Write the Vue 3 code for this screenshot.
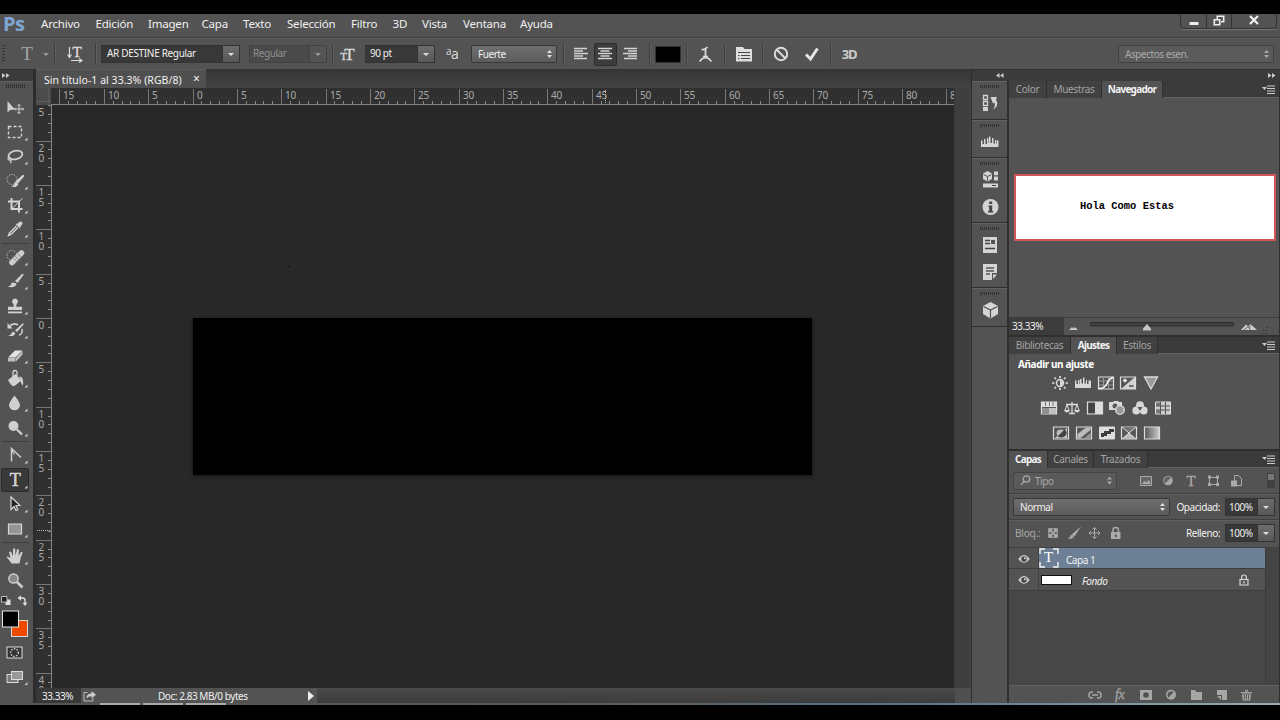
<template>
  <div class="screen">
    <header class="menubar">
      <span class="logo">Ps</span>
      <nav class="menus">
        <span v-for="m in menus" :key="m.label" :style="{ width: m.w + 'px' }">{{ m.label }}</span>
      </nav>
      <div class="window-buttons">
        <span class="min"><svg width="12" height="12"><path d="M1.5 8h9v3h-9z" fill="#eee" /></svg></span>
        <span class="restore"><svg width="12" height="12" fill="none" stroke="#eee" stroke-width="1.6"><path d="M4.3 4V1.3h6.4v5.4H8" /><path d="M1.3 4.8h5.4v5H1.3z" /></svg></span>
        <span class="close"><svg width="12" height="12"><path d="M2 2l8 8M10 2l-8 8" stroke="#eee" stroke-width="2.2" /></svg></span>
      </div>
    </header>

    <div class="options">
      <i class="vgrip"></i>
      <svg class="big-t" width="16" height="16"><text x="8" y="13.5" text-anchor="middle">T</text></svg>
      <i class="caret dim"></i>
      <i class="divider d1"></i>
      <svg class="orient" width="18" height="18" viewBox="0 0 18 18">
        <text x="11" y="12" text-anchor="middle">T</text>
        <path d="M3.5 2v10M1.5 9.5l2 3 2-3M5 15.5h10M13 13.5l3 2-3 2" />
      </svg>
      <i class="divider d2"></i>
      <div class="field font-name"><span>AR DESTINE Regular</span><b><i class="caret"></i></b></div>
      <div class="field font-style"><span>Regular</span><b><i class="caret dim"></i></b></div>
      <i class="divider d3"></i>
      <svg class="size-icon" width="17" height="16" viewBox="0 0 17 16">
        <text x="3.5" y="13.5" text-anchor="middle" font-size="11">T</text>
        <text x="9.5" y="13.5" text-anchor="middle" font-size="17">T</text>
      </svg>
      <div class="field font-size"><span>90 pt</span><b><i class="caret"></i></b></div>
      <span class="aa"><sup>a</sup>a</span>
      <div class="select strong"><span>Fuerte</span><i class="updown"></i></div>
      <i class="divider d4"></i>
      <span v-for="a in aligns" :key="a.id" class="align" :class="{ on: a.id === 'center' }">
        <svg width="14" height="14"><path :d="a.d" stroke="#d4d4d4" stroke-width="1.3" /></svg>
      </span>
      <i class="divider d5"></i>
      <i class="color-well"></i>
      <i class="divider d6"></i>
      <svg class="warp" width="14" height="18" viewBox="0 0 14 18" fill="none" stroke="#dcdcdc" stroke-width="1.7">
        <path d="M3.5 4.5q3.5.5 6-2.5M7.5 3.5v8M5 11.5h5" />
        <path d="M1.5 16.5l3-3q3-1.5 6 0l3 3" />
      </svg>
      <i class="divider d7"></i>
      <svg class="panel-toggle" width="16" height="16" viewBox="0 0 16 16">
        <path d="M0 1h7l1.5 2H16v12.5H0z" fill="#dedede" />
        <path d="M2 6.5h12M2 9.5h1.5M5 9.5h9M2 12.5h1.5M5 12.5h9" stroke="#484848" stroke-width="1.2" />
      </svg>
      <i class="divider d8"></i>
      <svg class="cancel" width="16" height="16"><circle cx="8" cy="8" r="6.2" /><path d="M4 4l8 8" /></svg>
      <svg class="commit" width="16" height="16"><path d="M2 8.5L6.5 13l7-10.5" /></svg>
      <i class="divider d9"></i>
      <span class="three-d">3D</span>
      <div class="select workspace"><span>Aspectos esen.</span><i class="updown"></i></div>
    </div>

    <main class="work">
      <aside class="tools">
        <div class="strip-head"><svg width="8" height="7"><path d="M0 1l3.5 2.5L0 6zM4 1l3.5 2.5L4 6z" fill="#ccc" /></svg></div>
        <div class="tools-body">
          <i class="grip"></i>
          <div v-for="(group, gi) in toolGroups" :key="gi" class="tool-group">
            <div v-for="t in group" :key="t" class="tool" :class="{ on: t === 'type' }">
              <svg width="24" height="24" viewBox="0 0 24 24">
                <g v-html="toolIcons[t]"></g>
                <path v-if="!['move', 'zoom'].includes(t)" d="M21.5 20.5h3v-3z" />
              </svg>
            </div>
          </div>
          <svg class="swatches" width="33" height="94" viewBox="0 0 33 94">
            <path d="M5.5 5.5h5V11h-5z" fill="#e0e0e0" />
            <path d="M1.5 2.5H7V8H1.5z" fill="#222" stroke="#bbb" />
            <path d="M19.5 4h3Q25 4 25 6.5v3" fill="none" stroke="#ddd" stroke-width="1.4" />
            <path d="M17.5 4L21 1.2v5.6zM25 12l-2.500-3.200h5z" fill="#ddd" />
            <rect x="11.5" y="26.5" width="16" height="16" fill="#ee4b00" stroke="#d8d8d8" />
            <rect x="2.5" y="17" width="16" height="16" fill="#000" stroke="#e4e4e4" />
            <rect x="7" y="53" width="15" height="11" fill="#333" stroke="#ddd" />
            <circle cx="14.5" cy="58.5" r="3.8" fill="#333" stroke="#ddd" stroke-width="1.3" stroke-dasharray="1.5 1.3" />
            <rect x="7" y="80.5" width="11" height="8" fill="#777" stroke="#ddd" />
            <rect x="11.5" y="77.5" width="11" height="8" fill="#999" stroke="#ddd" />
            <path d="M24.5 91h3v-3z" fill="#ccc" />
          </svg>
        </div>
      </aside>

      <section class="document">
        <div class="tabs-row">
          <div class="doc-tab"><span>Sin título-1 al 33.3% (RGB/8)</span><em>×</em></div>
        </div>
        <div class="doc-area">
          <div class="doc-main">
            <svg class="ruler" width="918" height="17" viewBox="36 88 918 17">
              <rect x="36" y="88" width="918" height="17" fill="#303030" />
              <path :d="hMinor" stroke="#888" />
              <path :d="hMajor" stroke="#777" />
              <rect x="36" y="88" width="15" height="17" fill="#4b4b4b" />
              <path d="M48.5 89v15M37 101.5h14" stroke="#777" stroke-dasharray="1 1.5" />
              <text v-for="l in hLabels" :key="l.x" :x="l.x + 3.5" y="99">{{ l.text }}</text>
              <path d="M605.5 90v14" stroke="#bbb" stroke-dasharray="1 1" />
              <path d="M51 104.5h903" stroke="#858585" />
            </svg>
            <div class="canvas-row">
              <svg class="ruler" width="16" height="583" viewBox="36 105 16 583">
                <rect x="36" y="105" width="16" height="583" fill="#303030" />
                <path :d="vMinor" stroke="#888" />
                <path :d="vMajor" stroke="#777" />
                <text x="38.5" y="115.5">5</text>
                <template v-for="l in vLabels" :key="l.y">
                  <text v-for="(c, i) in l.text" :key="i" x="38.5" :y="l.y + 10.5 + i * 9.5">{{ c }}</text>
                </template>
                <path d="M37 530.5h14" stroke="#bbb" stroke-dasharray="1 1" />
                <path d="M51.5 105v583" stroke="#858585" />
              </svg>
              <div class="canvas"><i class="speck"></i><div class="sheet"></div></div>
            </div>
          </div>
          <div class="vscroll"></div>
        </div>
        <footer class="status">
          <span class="zoom">33.33%</span>
          <div class="doc-info">
            <svg width="13" height="12" viewBox="0 0 13 12"><path d="M4.5 2.5H1V11h9V8" fill="none" stroke="#bbb" /><path d="M3.5 8.5q0-5 5-5V1L13 4.8 8.500 8.500V6q-3 0-5 2.500z" fill="#ccc" /></svg>
            <span>Doc: 2.83 MB/0 bytes</span>
            <i></i>
          </div>
          <div class="corner"></div>
        </footer>
      </section>

      <section class="right">
        <div class="strip-head wide">
          <svg width="8" height="7"><path d="M7.5 1L4 3.5 7.5 6zM3.5 1L0 3.5 3.5 6z" fill="#ccc" /></svg>
          <svg width="8" height="7"><path d="M0 1l3.5 2.5L0 6zM4 1l3.5 2.5L4 6z" fill="#ccc" /></svg>
        </div>
        <div class="right-body">
          <aside class="dock">
            <div v-for="(group, gi) in dockGroups" :key="gi" class="dock-group">
              <i class="grip"></i>
              <div v-for="d in group" :key="d" class="dock-icon">
                <svg width="20" height="20" viewBox="0 0 20 20" v-html="dockIcons[d]"></svg>
              </div>
            </div>
          </aside>

          <div class="panels">
            <div class="panel navigator">
              <div class="ptabs">
                <span class="t-color">Color</span><span class="t-swatch">Muestras</span><span class="t-nav on">Navegador</span>
                <svg class="pmenu" width="13" height="9" v-html="panelMenu"></svg>
              </div>
              <div class="nav-view"><div class="thumb">Hola Como Estas</div></div>
              <div class="nav-foot">
                <span>33.33%</span>
                <svg width="206" height="18" viewBox="0 0 206 18">
                  <path d="M5 12l3-3 1.5 1.5L11 9l3 3z" fill="#ccc" />
                  <rect x="26.5" y="4.5" width="143" height="3.5" rx="1" fill="#404040" stroke="#2c2c2c" />
                  <path d="M79 12.5v-2L83 6l4 4.5v2z" fill="#c4c4c4" />
                  <path d="M177 12l5-5.5 2.500 2 2-2.500 6.500 6z" fill="#ccc" />
                  <path d="M180 12l4-3.5 2.500 3.500M185 10l2-2.500" stroke="#666" fill="none" />
                  <path d="M196 15.5h9M199 12.5h6M202 9.5h3" stroke="#353535" stroke-dasharray="1.5 1.5" />
                </svg>
              </div>
            </div>

            <div class="panel adjustments">
              <div class="ptabs">
                <span class="t-lib">Bibliotecas</span><span class="t-adj on">Ajustes</span><span class="t-sty">Estilos</span>
                <svg class="pmenu" width="13" height="9" v-html="panelMenu"></svg>
              </div>
              <h4>Añadir un ajuste</h4>
              <div v-for="(row, ri) in adjustRows" :key="ri" class="adj-row" :class="'r' + ri">
                <svg v-for="a in row" :key="a" width="16" height="14" viewBox="0 0 16 14" v-html="adjustIcons[a]"></svg>
              </div>
            </div>

            <div class="panel layers">
              <div class="ptabs">
                <span class="t-lay on">Capas</span><span class="t-chan">Canales</span><span class="t-path">Trazados</span>
                <svg class="pmenu" width="13" height="9" v-html="panelMenu"></svg>
              </div>
              <div class="lrow filter">
                <div class="select kind">
                  <svg width="11" height="11" fill="none" stroke="#aaa" stroke-width="1.3"><circle cx="6.5" cy="4" r="3.2" /><path d="M4.3 6.3L1 9.8" /></svg>
                  <span>Tipo</span><i class="updown"></i>
                </div>
                <svg class="filters" width="104" height="14" viewBox="0 0 104 14">
                  <path d="M.5 2.5h11v9H.5z" fill="#666" stroke="#aaa" /><path d="M2 10l2.500-3 2 1.500L9 6l1.500 4z" fill="#aaa" />
                  <circle cx="28" cy="6.5" r="4.8" fill="#aaa" /><path d="M25.200 9.400a4 4 0 0 1 5.700-5.700z" fill="#666" />
                  <text x="51" y="11.5" text-anchor="middle" font-size="15" font-family="Liberation Serif" fill="#aaa" stroke="#aaa" stroke-width=".3">T</text>
                  <path d="M69.5 3.5h8v7h-8z" fill="none" stroke="#aaa" /><path d="M68 1.5h3v3h-3zM76 1.5h3v3h-3zM68 9h3v3h-3zM76 9h3v3h-3z" fill="#aaa" />
                  <path d="M94.5 1.5h4l3 3v7h-7z" fill="#555" stroke="#aaa" /><path d="M91 6.5h6v6h-6z" fill="#aaa" />
                </svg>
                <i class="toggle"></i>
              </div>
              <div class="lrow blend">
                <div class="select mode"><span>Normal</span><i class="updown"></i></div>
                <label>Opacidad:</label>
                <div class="field pct"><span>100%</span><b><i class="caret"></i></b></div>
              </div>
              <div class="lrow lock">
                <span class="bloq">Bloq.:</span>
                <svg width="76" height="14" viewBox="0 0 76 14">
                  <path d="M1.5 2.5h9v9h-9z" fill="#666" stroke="#999" />
                  <path d="M2 3h3v3H2zM7 3h3v3H7zM4.5 5.5h3v3h-3zM2 8h3v3H2zM7 8h3v3H7z" fill="#aaa" />
                  <path d="M20 12.5q3 0 3.500-3.500l2 .3 1.500 2q-3 2.500-7 1.200zM24.500 8.500L34 .5l-6.500 10z" fill="#aaa" />
                  <path d="M42 7h11M47.5 1.5v11M45.5 3.5l2-2 2 2M45.5 10.5l2 2 2-2M44 5l-2 2 2 2M51 5l2 2-2 2" stroke="#aaa" fill="none" />
                  <path d="M64 6h9.500v7H64z" fill="#aaa" /><path d="M66 6V4q0-2.500 2.700-2.500T71.500 4v2" fill="none" stroke="#aaa" stroke-width="1.5" /><path d="M68 8.5h1.500V11H68z" fill="#444" />
                </svg>
                <label>Relleno:</label>
                <div class="field pct"><span>100%</span><b><i class="caret"></i></b></div>
              </div>
              <div class="layer-area">
                <div class="layer-list">
                  <div class="layer active">
                    <div class="eye"><svg width="12" height="10" viewBox="0 0 12 10" v-html="eyeIcon"></svg></div>
                    <svg class="type-thumb" width="20" height="20" viewBox="0 0 20 20">
                      <path d="M1 6V1h5M14 1h5v5M19 14v5h-5M6 19H1v-5" fill="none" stroke="#f2f2f2" stroke-width="1.4" />
                      <text x="9.5" y="13.5" text-anchor="middle" font-family="Liberation Serif" font-size="15" fill="#fff">T</text>
                    </svg>
                    <span class="name">Capa 1</span>
                  </div>
                  <div class="layer">
                    <div class="eye"><svg width="12" height="10" viewBox="0 0 12 10" v-html="eyeIcon"></svg></div>
                    <i class="bg-thumb"></i>
                    <span class="name bg">Fondo</span>
                    <svg class="padlock" width="10" height="12" viewBox="0 0 10 12"><path d="M1 5.5h8V11H1z" fill="#555" stroke="#ddd" stroke-width="1.2" /><path d="M2.700 5V3q0-2 2.300-2t2.300 2v2" fill="none" stroke="#ddd" stroke-width="1.2" /><path d="M4.500 7h1.200v2.500H4.500z" fill="#ddd" /></svg>
                  </div>
                </div>
                <i class="layer-scroll"></i>
              </div>
              <div class="layer-foot">
                <svg width="168" height="14" viewBox="0 0 168 14" fill="#a6a6a6">
                  <path d="M6 4H4.500Q2 4 2 7t2.500 3H6M10 4h1.500Q14 4 14 7t-2.500 3H10M5 7h6" fill="none" stroke="#a6a6a6" stroke-width="1.5" />
                  <text x="28" y="11" font-family="Liberation Serif" font-style="italic" font-size="14" stroke="#a6a6a6" stroke-width=".3">fx</text>
                  <path d="M53 2h12v10H53z" /><circle cx="59" cy="7" r="2.8" fill="#505050" />
                  <circle cx="84" cy="6.8" r="5" /><path d="M81.400 9.400a3.700 3.700 0 0 1 5.200-5.200z" fill="#555" />
                  <path d="M104 2h4l1.500 2h5.500v8H104z" />
                  <path d="M130 2h10v10h-5V7h-5z" /><path d="M130 8h4v4z" />
                  <path d="M154 4h11v1.500h-11zM158 2h3v1.500h-3zM155 6.500h9l-.8 6h-7.400z" /><path d="M157.500 7v4.500M159.500 7v4.500M161.500 7v4.500" stroke="#555" />
                </svg>
              </div>
            </div>
          </div>
        </div>
      </section>
    </main>
    <div class="edge"><i></i><i></i><i></i></div>
  </div>
</template>

<script setup>
const menus = [
  { label: 'Archivo', w: 54.5 },
  { label: 'Edición', w: 52.5 },
  { label: 'Imagen', w: 53.5 },
  { label: 'Capa', w: 41.5 },
  { label: 'Texto', w: 44 },
  { label: 'Selección', w: 64 },
  { label: 'Filtro', w: 41.5 },
  { label: '3D', w: 29.5 },
  { label: 'Vista', w: 41 },
  { label: 'Ventana', w: 57 },
  { label: 'Ayuda', w: 50 },
];

const aligns = [
  { id: 'left', d: 'M0 1.5h13M0 4h9M0 6.5h14M0 9h9M0 11.5h13' },
  { id: 'center', d: 'M0 1.5h14M2.5 4h9M0 6.5h14M2.5 9h9M0 11.5h14' },
  { id: 'right', d: 'M1 1.5h13M5 4h9M0 6.5h14M5 9h9M1 11.5h13' },
];

// Rulers: one labelled tick every 5 cm, in window pixels
const STEP = 44.35;
const ORIGIN_X = 193;
const ORIGIN_Y = 318.5;
const snap = (v) => Math.floor(v) + 0.5;

const hLabels = [];
for (let i = -3; i <= 17; i++) {
  hLabels.push({ x: snap(ORIGIN_X + i * STEP), text: String(Math.abs(i * 5)) });
}
const vLabels = [];
for (let i = -4; i <= 8; i++) {
  vLabels.push({ y: snap(ORIGIN_Y + i * STEP), text: String(Math.abs(i * 5)) });
}
const hMajor = hLabels.map((l) => `M${l.x} 89v15`).join('');
const vMajor = vLabels.map((l) => `M36 ${l.y}h15`).join('');

let hMinor = '';
for (let i = -15; i <= 85; i++) hMinor += `M${snap(ORIGIN_X + (i * STEP) / 5)} 101v3`;
let vMinor = '';
for (let i = -24; i <= 41; i++) vMinor += `M48 ${snap(ORIGIN_Y + (i * STEP) / 5)}h3`;

const panelMenu = '<path d="M0 2h5L2.5 5z" fill="#ccc"/><path d="M5 1h8M5 3.5h8M5 6h8M5 8.5h8" stroke="#ccc"/>';
const eyeIcon = '<path d="M.3 5q5.700-8 11.400 0-5.700 7.500-11.400 0z" fill="#ccc"/><circle cx="6" cy="5" r="2.7" fill="#444"/><circle cx="6.8" cy="4.3" r="1" fill="#ddd"/>';

const toolGroups = [
  ['move', 'marquee', 'lasso', 'quick', 'crop', 'eyedropper'],
  ['heal', 'brush', 'stamp', 'history', 'eraser', 'bucket', 'blur', 'dodge'],
  ['pen', 'type', 'select', 'shape'],
  ['hand', 'zoom'],
];

const toolIcons = {
  move: '<path d="M4.5 6v11.500l2.500-2.500 5-.5z"/><path d="M16 9.500v9M11.500 14h9M14.500 11l1.500-1.500 1.500 1.500M14.500 17l1.500 1.500 1.500-1.500M13 12.500L11.500 14l1.500 1.500M19 12.500l1.500 1.500-1.500 1.500" fill="none" stroke="#d4d4d4"/>',
  marquee: '<path d="M5.5 6.500h13v11h-13z" fill="none" stroke="#d4d4d4" stroke-width="1.4" stroke-dasharray="3 2"/>',
  lasso: '<ellipse cx="12.5" cy="11" rx="7" ry="4.3" transform="rotate(-12 12.5 11)" fill="none" stroke="#d0d0d0" stroke-width="1.8"/><path d="M6 13q-2 2 0 3t2-1M7 16q2 1 .5 3" fill="none" stroke="#d0d0d0" stroke-width="1.3"/>',
  quick: '<circle cx="9" cy="10.5" r="5" fill="none" stroke="#ccc" stroke-dasharray="1.2 1.3"/><path d="M20 5.500l1.500 1.500-6.500 7.500-2.500-2zM8 17.500q3 0 4-5l3.500 2.500q-2 4.500-7.500 2.500z"/>',
  crop: '<path d="M8.5 5v11h11M5 8.500h11v11" fill="none" stroke="#d4d4d4" stroke-width="2"/><path d="M9 15.500L19.500 5.500" stroke="#d4d4d4"/>',
  eyedropper: '<path d="M14.500 6.500q3-3 4.500-1.500t-1.500 4.500l-.5 2-4.500-4.500z"/><path d="M13.500 9L6.500 16l-1 2.500L8 17.500l7-7" fill="#555" stroke="#d4d4d4" stroke-width="1.4"/>',
  heal: '<circle cx="9" cy="10.5" r="5" fill="none" stroke="#ccc" stroke-dasharray="1.2 1.3"/><path d="M9 17.500L18.500 8" stroke="#ccc" stroke-width="5.5" stroke-linecap="round"/><path d="M12 11l4.500 4.500M10.500 13l4 4M15 9l3.500 3.500" stroke="#777" stroke-width=".8"/>',
  brush: '<path d="M19.500 4.500l1.200 1.200-6.200 8.300-2.500-2zM4 17.500q4 0 4.500-3.500 3-1.500 5 1-2 5-9.500 2.500z"/>',
  stamp: '<path d="M12 4.500a3 3 0 0 1 2 5.200q-1 1-.7 3H19v3.300H5v-3.300h5.700q.3-2-.7-3a3 3 0 0 1 2-5.200z"/><path d="M5 17.500h14v1.800H5z"/>',
  history: '<path d="M5 17.500q3 0 4.500-4l3 1.500q-1.500 4.500-7.500 2.500zM20 5l.8 1.300-6.800 7.700-2-1.500z"/><path d="M6 9q4-5 9-2M16 17q4-1 3-6" fill="none" stroke="#d0d0d0" stroke-width="1.6"/><path d="M4.500 5v5.500h5z"/>',
  eraser: '<path d="M5 14.500l7-7h7.500l-7 7z" fill="#e4e4e4"/><path d="M5 15h7.500v3.500H5zM13 15l6.500-7v3.500L13 18.500z" fill="#c0c0c0"/>',
  bucket: '<path d="M5 13l7.500-6 6 6.500-7 5.500q-2.500 1.500-6.500-6z"/><path d="M10 11V6q0-2.500 2-2.500T14 6v3" fill="none" stroke="#d0d0d0" stroke-width="1.3"/><path d="M16 9.500q5-.5 4 9-2-1-2.500-6z"/>',
  blur: '<path d="M11.500 4.500q5.500 7 5.500 9.500a5 4.800 0 0 1-11 0q0-2.500 5.500-9.500z"/>',
  dodge: '<circle cx="10.5" cy="10" r="5"/><path d="M14 13.500l5 5" stroke="#ccc" stroke-width="2.4"/>',
  pen: '<path d="M8.500 18.500V5.500L18 14.500" fill="none" stroke="#ccc" stroke-width="1.5"/><path d="M8.500 5l3.500 7-1-.5-2.500-3z"/>',
  type: '<text x="12" y="17.5" text-anchor="middle" font-family="Liberation Serif" font-size="18" stroke="#dcdcdc" stroke-width=".5">T</text>',
  select: '<path d="M8 5v12.500l3-3 2 4 1.800-.8-1.900-4 3.900-.4z" fill="#222" stroke="#d8d8d8" stroke-width="1.2"/>',
  shape: '<path d="M5.500 7h13v10h-13z" fill="#959595" stroke="#d8d8d8" stroke-width="1.2"/>',
  hand: '<path d="M8.500 19.500q-1-2-5-6.500 1-1.500 4 1.200L6 8q1.500-1 2.500.5l1.500 4V5q1-1.500 2.200 0l.3 6.500L14 5.500q1.300-1 2 .5l-.5 6L18 8q1.500-.5 1.500 1-2.500 5-3 10.500z"/>',
  zoom: '<circle cx="10.5" cy="9.5" r="4.6" fill="#888" stroke="#ccc" stroke-width="1.5"/><path d="M14 13l5.500 5.500" stroke="#ccc" stroke-width="2.6"/>',
};

const dockGroups = [['history'], ['histogram'], ['props', 'info'], ['char', 'notes'], ['cube']];

const dockIcons = {
  history: '<path d="M3.500 2.500h4v4h-4zM3.500 8.500h4v4h-4z" fill="none" stroke="#d4d4d4" stroke-width="1.3"/><path d="M3 14h5v4H3z"/><path d="M11.500 17.500q4.500-3 3-8l-1.500 1L10.500 4h6.500l-1 2.500q4 7-4.500 11z"/>',
  histogram: '<path d="M1 15V8.500h1.500V12H4V7h1.500v5H7V6h1.500v5H9V4.500h1.500V11H12V6h1.500v5.500H15V8h1.500v4H17V8.500h1.500V15z"/>',
  props: '<path d="M7.500 1L12 3.500v5.500l-4.500 2.500L3 9V3.500z"/><path d="M3.500 4.500l4 2 4-2M7.500 6.500V11" fill="none" stroke="#555"/><path d="M14 1.500h4v3.700h-4zM14 6.500h4v4h-4zM3 13.500h15v4H3z"/><path d="M12 15.500h4" stroke="#444"/>',
  info: '<circle cx="10.5" cy="10" r="8"/><path d="M9.200 4.500h3V7h-3zM8.500 8.500h3.700v5.500h1v1.500H8V14h1.200v-4h-.7z" fill="#444"/>',
  char: '<path d="M3 2h14v16H3z"/><path d="M5 5.500h5M5 8.500h5M5 13.500h10" stroke="#444" stroke-width="1.5"/><path d="M11 5h4v4h-4z" fill="#555"/>',
  notes: '<path d="M3 2h14v9h-5v7H3z"/><path d="M13 12.500h4L13 17z"/><path d="M6 6h8M6 9h8M6 12h4" stroke="#555" stroke-width="1.3"/>',
  cube: '<path d="M10.500 2l7.500 4v8l-7.500 4.500L3 14V6z"/><path d="M3.500 6.500l7 3.500 7-3.500M10.500 10v8" fill="none" stroke="#505050" stroke-width="1.2"/>',
};

const adjustRows = [
  ['bright', 'levels', 'curves', 'exposure', 'vibrance'],
  ['hue', 'balance', 'bw', 'photo', 'mixer', 'lookup'],
  ['invert', 'poster', 'threshold', 'selective', 'gradient'],
];

const frame = '<path d="M.5 1h15v12H.5z" fill="#555" stroke="#ddd" stroke-width="1.2"/>';

const adjustIcons = {
  bright: '<circle cx="8" cy="7" r="3.5" fill="none" stroke="#ddd" stroke-width="1.4"/><path d="M8 4v6q3 0 3-3t-3-3z"/><path d="M8 0v2M8 12v2M0 7h2.500M13.500 7H16M2.500 1.500L4 3M12 11l1.500 1.500M13.500 1.500L12 3M4 11l-1.500 1.500" stroke="#ddd" stroke-width="1.7"/>',
  levels: '<path d="M0 12V4.500h1.500V8H3V4h1.500v4H5V3h1.500v4.500H8V1.500h1.500v6H11V4h1v4h1.500V4.500H16V12z"/>',
  curves: frame + '<path d="M5.500 1v12M10.500 1v12M1 5h14M1 9h14" stroke="#999"/><path d="M1 12.500q6 0 8-5t6-6" fill="none" stroke="#fff" stroke-width="1.5"/>',
  exposure: frame + '<path d="M1 13L15 1v12z" fill="#d4d4d4"/><path d="M3 4.500h4M5 2.500v4" stroke="#fff" stroke-width="1.3"/><path d="M9 10h4.500" stroke="#333" stroke-width="1.3"/>',
  vibrance: '<path d="M1.500 1h13L8 13z" fill="#999" stroke="#ddd" stroke-width="1.3"/>',
  hue: frame + '<path d="M1 1h14v5H1z" fill="#ddd"/><path d="M4.500 1v4M8.500 1v4M12 1v4" stroke="#777"/><path d="M8 7h7v6H8z" fill="#c0c0c0"/><path d="M1 7h7v6H1z" fill="#909090"/>',
  balance: '<path d="M2 3.500h12M8 1v11M5 12.500h6" stroke="#ddd" stroke-width="1.3"/><path d="M3 4L.8 9.500h4.400zM13 4l-2.200 5.500h4.400z" fill="none" stroke="#ddd"/><path d="M0 9.500h6q-3 4-6 0zM10 9.500h6q-3 4-6 0z"/>',
  bw: frame + '<path d="M8 1h7.500v12H8z" fill="#ddd"/><path d="M1.500 2H8v10H1.500z" fill="#444"/>',
  photo: '<path d="M0 1h4l1-1h4l1 1h3v8H0z"/><circle cx="6" cy="5" r="2.5" fill="#555"/><circle cx="11" cy="9" r="4.3" fill="#999" stroke="#ddd" stroke-width="1.3"/>',
  mixer: '<circle cx="8" cy="4.2" r="3.9"/><circle cx="4.3" cy="9.5" r="3.9"/><circle cx="11.7" cy="9.5" r="3.9"/><path d="M5.500 6h5L8 10z" fill="#555"/>',
  lookup: '<path d="M.5 1h15v12H.5z" fill="#ccc" stroke="#ddd"/><path d="M1 1.500h4v3.500H1zM1 9.500h4v3H1z" fill="#777"/><path d="M5.500 1v12M10.500 1v12M1 5h14M1 9h14" stroke="#555"/>',
  invert: frame + '<path d="M2 12L14 2v10z" fill="#ccc"/><ellipse cx="8" cy="7" rx="4.5" ry="3.5" fill="#bbb"/><path d="M11.500 3.500a4.500 3.500 0 0 1-7 7z" fill="#444"/>',
  poster: frame + '<path d="M1.500 8L10 1.500h4.500V4L4 12.500H1.500z" fill="#bbb"/><path d="M8 12.500L14.500 7v5.500z" fill="#999"/>',
  threshold: '<path d="M.5 1h15v12H.5z" fill="#ddd" stroke="#ddd"/><path d="M2 9V7h3V5h5V3h5v3h-3v2H8v2H5v1H2z" fill="#3c3c3c"/>',
  selective: frame + '<path d="M1 1h14L8 7z" fill="#777"/><path d="M1 13h14L8 7z" fill="#bbb"/><path d="M1 1l14 12M15 1L1 13" stroke="#ddd"/>',
  gradient: '<defs><linearGradient id="gm"><stop offset="0" stop-color="#555"/><stop offset="1" stop-color="#ccc"/></linearGradient></defs><path d="M.5 1h15v12H.5z" fill="url(#gm)" stroke="#ddd" stroke-width="1.2"/>',
};
</script>

<style>
body {
  background: #000;
  overflow: hidden;
}
</style>

<style scoped>
.screen {
  width: 1280px;
  height: 720px;
  box-sizing: border-box;
  padding-top: 14px;
  background: #000;
  color: #f0f0f0;
  font: 10px/14px "Noto Sans", "Open Sans", sans-serif;
  letter-spacing: -.45px;
  display: flex;
  flex-direction: column;
  overflow: hidden;
  white-space: nowrap;
}

.screen * {
  box-sizing: border-box;
}

svg {
  display: block;
  flex: none;
  overflow: visible;
}

svg.ruler { overflow: hidden; }

i {
  display: block;
  flex: none;
}

/* Menu bar */
.menubar {
  height: 24px;
  flex: none;
  display: flex;
  background: #535353;
  border-bottom: 1px solid #404040;
}

.logo {
  width: 41px;
  padding-left: 3px;
  font: bold 20px/19px "Open Sans", sans-serif;
  color: #7fa6d2;
}

.menus {
  display: flex;
  flex: 1;
  font-size: 11.5px;
  letter-spacing: -.2px;
  line-height: 20px;
}

.window-buttons {
  display: flex;
  width: 97px;
  height: 15px;
  margin-right: 3px;
  border: 1px solid #333;
  border-top: 0;
  border-radius: 0 0 3px 3px;
  box-shadow: 0 1px 0 #777;
}

.window-buttons span {
  display: flex;
  justify-content: center;
  border-right: 1px solid #333;
}

.min { width: 26px; }
.restore { width: 25px; }
.window-buttons .restore { padding-top: 1px; }
.window-buttons .close { flex: 1; border: 0; }

/* Options bar */
.options {
  height: 31px;
  flex: none;
  display: flex;
  align-items: center;
  background: #535353;
  border-top: 1px solid #5e5e5e;
}

.vgrip {
  width: 3px;
  height: 18px;
  margin: 0 16px 0 2px;
  background: repeating-linear-gradient(#333 0 1px, #535353 1px 3px);
}

.options text {
  font-family: "Liberation Serif", serif;
  letter-spacing: 0;
  fill: #dcdcdc;
}

.big-t text { font-size: 19px; fill: #a4a4a4; }
.orient text { font-size: 15px; stroke: #dcdcdc; stroke-width: .4px; }
.orient path { fill: none; stroke: #dcdcdc; stroke-width: 1.2px; }
.size-icon { margin-left: 6px; }
.size-icon text { stroke: #dcdcdc; stroke-width: .3px; }
.big-t { margin-left: -2px; }

.caret {
  border: 3px solid transparent;
  border-top: 3px solid #e0e0e0;
  border-bottom: 0;
}

.caret.dim { border-top-color: #999; }
.options > .caret { margin-left: 8px; }

.divider {
  width: 2px;
  height: 22px;
  background: #3f3f3f;
  border-right: 1px solid #5e5e5e;
}

.d1 { margin: 0 10px 0 5px; }
.d2 { margin: 0 4px 0 11px; }
.d3 { margin-left: 5px; }
.d4 { margin: 0 4px 0 6px; }
.d5 { margin: 0 4px 0 6px; }
.d6 { margin: 0 10px 0 5px; }
.d7 { margin: 0 10px 0 12px; }
.d8 { margin: 0 9px 0 10px; }
.d9 { margin: 0 10px 0 10px; }

.field {
  display: flex;
  height: 18px;
  border: 1px solid #333;
  background: #383838;
  line-height: 15px;
  color: #f0f0f0;
}

.field span {
  flex: 1;
  padding-left: 5px;
}

.field b {
  width: 17px;
  display: flex;
  align-items: center;
  justify-content: center;
  background: linear-gradient(#6c6c6c, #585858);
  border-left: 1px solid #333;
}

.font-name { width: 139px; letter-spacing: -.33px; }
.font-style { width: 78px; margin-left: 9px; background: #4a4a4a; border-color: #424242; color: #8f8f8f; }
.font-style span { padding-left: 3px; }
.font-style b { background: #545454; border-color: #424242; }
.font-size { width: 70px; margin-left: 8px; }
.font-size span { padding-left: 4px; }

.aa {
  width: 25px;
  margin-left: 11px;
  font: 14px/16px "Open Sans", sans-serif;
  color: #ddd;
}

.aa sup {
  font-size: 10px;
  line-height: 8px;
  vertical-align: 4px;
}

.select {
  display: flex;
  align-items: center;
  justify-content: space-between;
  height: 18px;
  padding: 0 4px 0 6px;
  border: 1px solid #383838;
  border-radius: 2px;
  background: linear-gradient(#6f6f6f, #5b5b5b);
  color: #f0f0f0;
}

.strong { width: 86px; }

.updown {
  width: 5px;
  height: 8px;
  background: #e0e0e0;
  clip-path: polygon(50% 0, 100% 38%, 0 38%, 0 62%, 100% 62%, 50% 100%, 0 62%, 0 38%);
}

.workspace {
  width: 156px;
  margin: 0 6px 0 auto;
  background: #5a5a5a;
  border-color: #414141;
  color: #aaa;
}

.workspace .updown { background: #aaa; }

.align {
  width: 23px;
  height: 23px;
  margin-right: 1.6px;
  display: flex;
  align-items: center;
  justify-content: center;
  border: 1px solid transparent;
  border-radius: 2px;
}

.align.on {
  background: #3c3c3c;
  border-color: #2d2d2d;
}

.color-well {
  width: 26px;
  height: 17px;
  background: #000;
  border: 1px solid #333;
}

.cancel { fill: none; stroke: #dcdcdc; stroke-width: 2px; }
.commit { fill: none; stroke: #e6e6e6; stroke-width: 3px; margin-left: 15px; }

.three-d {
  font: bold 13px/16px "Open Sans", sans-serif;
  letter-spacing: -1.3px;
  color: #ccc;
}

/* Work area */
.work {
  height: 634px;
  flex: none;
  display: flex;
  background: #2d2d2d;
}

.strip-head {
  height: 12px;
  flex: none;
  padding: 2px 0 0 2px;
  background: #3b3b3b;
  border-top: 1px solid #333;
}

.tools {
  width: 33px;
  display: flex;
  flex-direction: column;
}

.tools-body {
  flex: 1;
  background: #535353;
  border-top: 1px solid #5f5f5f;
}

.grip {
  width: 19px;
  height: 3px;
  background: repeating-linear-gradient(90deg, #333 0 1px, #535353 1px 2px);
}

.tools-body > .grip { margin: 2px 0 7px 6px; height: 4px; }

.tool-group { border-bottom: 1px solid #3d3d3d; padding-bottom: 1px; margin: 0 4px 0 2px; }
.tool-group + .tool-group { padding-top: 1px; }
.tool-group:nth-last-of-type(1) { border: 0; }

.tool {
  height: 24.45px;
  width: 28px;
  margin-left: -1px;
  display: flex;
  align-items: center;
  padding-left: 1px;
  border: 1px solid transparent;
  border-radius: 2px;
}

.tool.on {
  background: #393939;
  border-color: #2b2b2b;
}

.tool svg { fill: #d0d0d0; }

/* Document */
.document {
  width: 935px;
  margin-left: 3px;
  display: flex;
  flex-direction: column;
  background: #404040;
}

.tabs-row {
  height: 19px;
  flex: none;
  display: flex;
  background: linear-gradient(#363636, #424242);
}

.doc-tab {
  display: flex;
  width: 170px;
  padding: 0 6px 0 8px;
  justify-content: space-between;
  background: #505050;
  font-size: 10.5px;
  letter-spacing: .04px;
  line-height: 20px;
  border-top: 1px solid #5c5c5c;
  color: #f2f2f2;
}

.doc-tab em {
  font-style: normal;
  font-size: 12px;
  line-height: 18px;
}

.doc-area {
  flex: 1;
  display: flex;
}

.doc-main { width: 918px; }

.canvas-row { display: flex; }

.ruler text {
  font: 10px "Noto Sans", sans-serif;
  letter-spacing: -.2px;
  fill: #aaa;
}

.canvas {
  width: 902px;
  height: 583px;
  background: #282828;
  padding-left: 141px;
}

.speck {
  width: 1px;
  height: 1px;
  margin: 161px 0 0 95px;
  background: #000;
}

.sheet {
  width: 619px;
  height: 157px;
  margin-top: 51px;
  background: #000;
  box-shadow: 0 1px 3px #111;
}

.vscroll {
  flex: 1;
  background: #3f3f3f;
  border-left: 1px solid #383838;
  border-right: 1px solid #454545;
}

.status {
  height: 15px;
  flex: none;
  display: flex;
  background: linear-gradient(#4a4a4a, #3c3c3c);
  line-height: 16px;
}

.zoom {
  width: 45px;
  padding-left: 6px;
  background: #383838;
}

.doc-info {
  width: 236px;
  display: flex;
  align-items: center;
  padding: 0 3px 0 2px;
  background: #535353;
}

.doc-info span {
  flex: 1;
  padding-left: 62px;
}

.doc-info i {
  border: 5px solid transparent;
  border-left: 6px solid #eee;
  border-right: 0;
}

.corner {
  width: 16px;
  margin-left: auto;
  background: #4f4f4f;
}

/* Right side */
.right {
  width: 308px;
  margin-left: 1px;
  display: flex;
  flex-direction: column;
  background: #2f2f2f;
}

.strip-head.wide {
  display: flex;
  justify-content: space-between;
  padding: 2px 4px 0 24px;
}

.right-body {
  flex: 1;
  display: flex;
}

.dock {
  width: 35px;
  background: #535353;
}

.dock-group {
  padding: 2px 0 3px;
  border-top: 1px solid #636363;
  border-bottom: 1px solid #2f2f2f;
}

.dock-group .grip { margin: 1px 0 1px 8px; }

.dock-icon {
  height: 26.5px;
  padding: 4px 0 0 8px;
}

.dock svg { fill: #d4d4d4; }

.panels {
  width: 270px;
  margin-left: 2px;
}

.panel {
  background: #535353;
  margin-bottom: 2px;
}

.ptabs {
  display: flex;
  height: 17px;
  background: #3b3b3b;
  border-bottom: 1px solid #636363;
  line-height: 16px;
  letter-spacing: -.3px;
  color: #a4a4a4;
}

.ptabs span {
  height: 17px;
  text-align: center;
  border-right: 1px solid #303030;
  background: #414141;
}

.ptabs .on {
  background: #535353;
  color: #f2f2f2;
  font-weight: bold;
  letter-spacing: -.75px;
}

.pmenu { margin: 4px 4px 0 auto; }

.t-color { width: 38px; }
.t-swatch { width: 55px; }
.t-nav { width: 61px; }
.t-lib { width: 62px; }
.t-adj { width: 46px; }
.t-sty { width: 41px; }
.t-lay { width: 39px; }
.t-chan { width: 46px; }
.t-path { width: 54px; }

.navigator { height: 254px; }

.nav-view {
  height: 219px;
  padding: 76px 0 0 5px;
}

.thumb {
  width: 262px;
  height: 67px;
  border: 2px solid #cf5558;
  background: #fff;
  color: #000;
  font: bold 10.45px/60px "Liberation Mono", monospace;
  letter-spacing: 0;
  padding-left: 64px;
}

.nav-foot {
  height: 18px;
  display: flex;
  border-top: 1px solid #3d3d3d;
  line-height: 17px;
}

.nav-foot span {
  width: 55px;
  padding-left: 3px;
  background: #3c3c3c;
}

.adjustments { height: 112px; }

.adjustments h4 {
  margin: 3px 0 0 9px;
  font-size: 10px;
  line-height: 14px;
  letter-spacing: -.4px;
  color: #fff;
}

.adj-row {
  display: flex;
  gap: 6.8px;
  fill: #d8d8d8;
}

.r0 { margin: 5px 0 0 43px; }
.r1 { margin: 11px 0 0 32px; }
.r2 { margin: 11px 0 0 44px; }

.layers { height: 253px; margin: 0; }

.lrow {
  display: flex;
  align-items: center;
  border-bottom: 1px solid #404040;
}

.filter { height: 26px; padding-left: 4px; }

.kind {
  width: 104px;
  justify-content: flex-start;
  gap: 4px;
  background: #5a5a5a;
  border-color: #444;
  color: #aaa;
}

.kind .updown { background: #aaa; margin-left: auto; }

.filters { margin-left: 23px; }

.filters text { letter-spacing: 0; }

.toggle {
  width: 8px;
  height: 15px;
  margin: 0 4px 0 auto;
  background: linear-gradient(#777 45%, #404040 45%);
  border: 1px solid #404040;
}

.blend, .lock {
  height: 26px;
  padding: 0 4px;
  border-top: 1px solid #5f5f5f;
}

.mode { width: 157px; }

.lrow label {
  margin-left: auto;
  margin-right: 5px;
}

.pct { width: 50px; height: 18px; line-height: 16px; }
.pct span { padding-left: 3px; }

.bloq {
  width: 34px;
  padding-left: 2px;
  letter-spacing: -.2px;
  color: #aaa;
}

.lock { border-bottom: 0; height: 27px; padding-bottom: 2px; }

.layer-area {
  height: 138px;
  display: flex;
}

.layer-list {
  width: 256px;
  background: #474747;
}

.layer {
  height: 22px;
  display: flex;
  align-items: center;
  background: #535353;
  border-bottom: 1px solid #3d3d3d;
}

.layer.active { background: linear-gradient(90deg, #535353 30px, #6d8096 30px); border-top: 1px solid #404040; }

.eye {
  width: 30px;
  height: 21px;
  padding: 6px 0 0 9px;
  border-right: 1px solid #424242;
}

.type-thumb text { letter-spacing: 0; }
.layer .name { margin-left: 7px; padding-top: 3px; }

.bg-thumb {
  width: 31px;
  height: 10px;
  margin-left: 2px;
  background: #fff;
  border: 1px solid #111;
}

.layer .name.bg { font-style: italic; margin-left: 10px; padding-top: 2px; }
.padlock { margin: 0 16px 0 auto; }

.layer-scroll {
  flex: 1;
  background: #444;
  border-left: 1px solid #3a3a3a;
}

.layer-foot {
  height: 18px;
  padding: 2px 0 0 78px;
  background: #535353;
  border-top: 1px solid #626262;
}

/* Bottom edge of the window */
.edge {
  height: 2px;
  flex: none;
  display: flex;
  gap: 3px;
  padding-left: 100px;
  background: linear-gradient(90deg, #555 35%, #5d7180 70%, #9cabb2);
}

.edge i {
  width: 40px;
  height: 2px;
  background: #aaa;
}
</style>
